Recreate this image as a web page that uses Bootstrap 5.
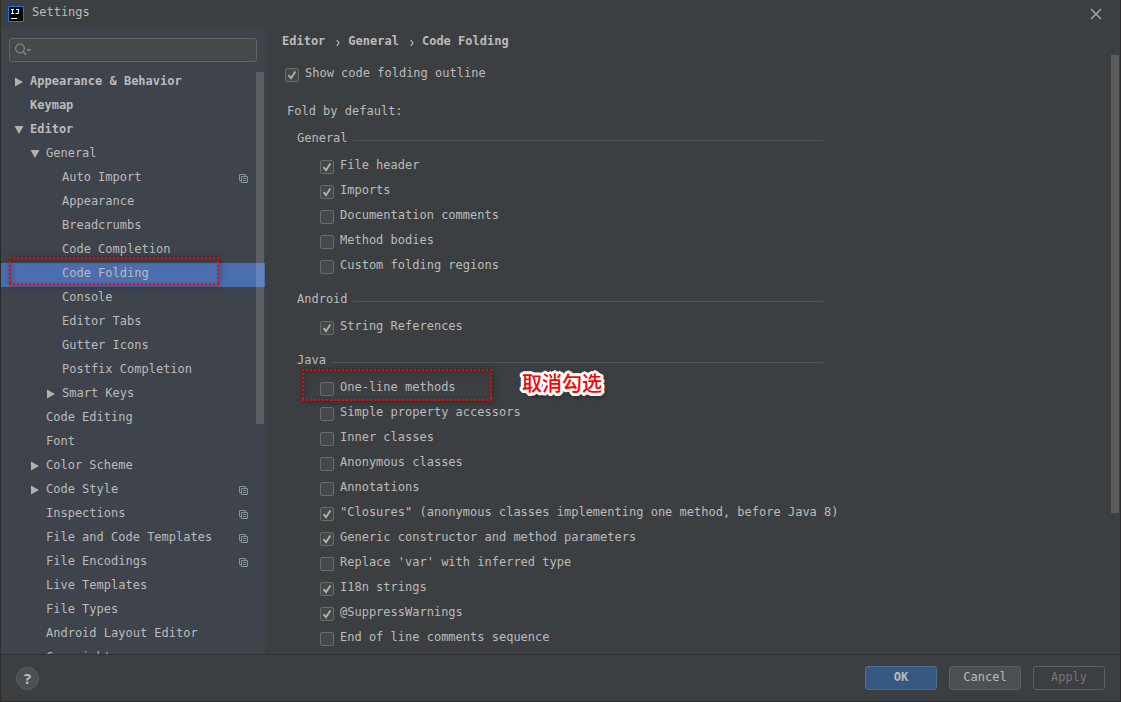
<!DOCTYPE html>
<html lang="en">
<head>
<meta charset="utf-8">
<meta name="viewport" content="width=device-width, initial-scale=1">
<title>Settings</title>
<link href="https://cdn.jsdelivr.net/npm/bootstrap@5.3.0/dist/css/bootstrap.min.css" rel="stylesheet">
<style>
  body { background: #3c3f41; color: #bbbbbb; font: 12px/20px "DejaVu Sans Mono", "Liberation Mono", "Noto Sans CJK SC", monospace; }
  a { color: inherit; text-decoration: none; }
  .dialog { border: 1px solid #2b2b2b; border-top: 0; }
  .titlebar { height: 28px; padding: 0 18px 4px 7px; }
  .titlebar .app-icon { margin-top: 4px; }
  .close-btn { margin-top: 4px; line-height: 0; }
  .plain-btn { background: none; border: 0; padding: 0; color: inherit; }

  .side { width: 264px; background: #3f434c; }
  .search { margin: 10px 8px 9px; }
  .search input { width: 100%; height: 24px; background: #45494a; border: 1px solid #646464; border-radius: 3px; color: #bbbbbb; padding: 0 6px 0 26px; outline: 0; }
  .search svg { left: 6px; top: 5px; }
  .tree-item { height: 24px; line-height: 20px; padding-right: 17px; }
  .tree-item .twisty { width: 16px; line-height: 0; padding-top: 6px; }
  .lvl-0 { padding-left: 13px; }
  .lvl-1 { padding-left: 29px; }
  .lvl-2 { padding-left: 45px; }
  .tree-item.chosen { background: #4b6eaf; }
  .tree-item .shared { margin-top: 7px; line-height: 0; }
  .thumb { width: 8px; background: rgba(255,255,255,.15); }
  .side .thumb { top: 44px; right: 1px; height: 352px; }
  .page .thumb { top: 27px; right: 1px; height: 458px; }

  .page { padding-left: 17px; }
  .crumbs { height: 34px; padding-top: 3px; font-weight: bold; }
  .crumbs svg { margin: 8px 8px 0 11px; }
  .option { height: 25px; line-height: 22px; }
  .option input { appearance: none; width: 14px; height: 14px; margin: 6px 6px 0 0; border: 1px solid #6b6b6b; border-radius: 2px; background: #43494a; flex: none; }
  .option input:checked { background: #43494a url("data:image/svg+xml,%3Csvg xmlns='http://www.w3.org/2000/svg' viewBox='0 0 12 12'%3E%3Cpath d='M2.5 6.2 5 9.2 9.4 2.4' fill='none' stroke='%23b4b4b4' stroke-width='1.8'/%3E%3C/svg%3E"); }
  .lead-option { padding-left: 3px; }
  .fold-title { height: 31px; padding: 15px 0 0 5px; line-height: 18px; }
  .groups { max-width: 541px; padding-left: 15px; }
  .groups legend { height: 36px; margin: 0; padding-top: 10px; font-size: 12px; line-height: 20px; }
  .groups legend::after { content: ""; flex: 1; height: 1px; margin: 12px 0 0 5px; background: #515151; }
  .groups .option { padding-left: 23px; }

  .marker { pointer-events: none; box-shadow: 1px 1px 6px rgba(0,0,0,.3), inset 2px 2px 6px rgba(0,0,0,.25); }
  .marker::after { content: ""; position: absolute; inset: 0;
    --across: linear-gradient(90deg, #f00 50%, transparent 50%);
    --down: linear-gradient(#f00 50%, transparent 50%);
    background:
      var(--across) 0 0 / 4px 2px repeat-x,
      var(--across) 0 100% / 4px 2px repeat-x,
      var(--down) 0 0 / 2px 4px repeat-y,
      var(--down) 100% 0 / 2px 4px repeat-y; }
  .marker-tree { left: 8px; top: -6px; width: 210px; height: 28px; }
  .marker-option { left: 5px; top: -7px; width: 190px; height: 32px; }
  .note { left: 225px; top: -5px; font: 500 20px/24px "Noto Sans CJK SC", sans-serif; color: #f00; white-space: nowrap;
    text-shadow: 2px 0 #fff, -2px 0 #fff, 0 2px #fff, 0 -2px #fff, 2px 2px #fff, -2px -2px #fff, 2px -2px #fff, -2px 2px #fff, 3px 0 #fff, -3px 0 #fff, 0 3px #fff, 0 -3px #fff, 1px 1px #fff, -1px -1px #fff, 3px 1px #fff, 3px -1px #fff, -3px 1px #fff, -3px -1px #fff, 1px 3px #fff, -1px 3px #fff, 2px 3px 5px #000; }

  .foot { height: 47px; border-top: 1px solid #323232; padding: 0 15px; }
  .help { width: 23px; height: 23px; border: 1px solid #5e6060; border-radius: 50%; background: #4c5052; font: bold 15px/20px "Noto Sans", sans-serif; }
  .foot .btn { --bs-btn-border-radius: 3px; width: 72px; height: 24px; padding: 0 0 3px; font-size: 12px; line-height: 18px; border-color: #5e6060; background: #4c5052; color: #bbbbbb; margin-left: 12px; }
  .foot .btn-ok { background: #365880; border-color: #4c708c; font-weight: bold; }
  .foot .btn:disabled { background: none; color: #777777; opacity: 1; }
</style>
</head>
<body>
<svg class="d-none">
  <symbol id="right" viewBox="0 0 10 10"><path d="M1 .5 9 5 1 9.5z" fill="#afb1b3"/></symbol>
  <symbol id="down" viewBox="0 0 10 10"><path d="M.5 1h9L5 9z" fill="#afb1b3"/></symbol>
  <symbol id="copy" viewBox="0 0 9 9"><path d="M2 6.500H.5v-6h6V2M2.500 2.500h6v6h-6zM4 4.500h3M4 6.500h3" fill="none" stroke="#87939a"/></symbol>
  <symbol id="sep" viewBox="0 0 4 8"><path d="M.7 1 3 4 .7 7" fill="none" stroke="#bbb" stroke-width="1.2"/></symbol>
</svg>
<div class="dialog vh-100 d-flex flex-column overflow-hidden">
  <header class="titlebar d-flex align-items-center flex-shrink-0">
    <svg class="app-icon" width="16" height="16" viewBox="0 0 16 16"><path d="M.5.5h15v15H.5z" fill="#000" stroke="#087cfa"/><path d="M3 3.500h3M4.500 3v5M3 7.500h3M8 3.500h2.500V6.500q0 1-1 1H7.500" fill="none" stroke="#fff" stroke-width="1.200"/><path d="M3 12h6v1H3z" fill="#fff"/></svg>
    <span class="ms-2 ps-0">Settings</span>
    <button class="plain-btn close-btn ms-auto" type="button" aria-label="Close"><svg width="12" height="12" viewBox="0 0 12 12"><path d="m1 1 10 10M11 1 1 11" stroke="#afb1b3" stroke-width="1.200"/></svg></button>
  </header>

  <div class="d-flex flex-grow-1 overflow-hidden">
    <nav class="side position-relative flex-shrink-0 overflow-hidden" aria-label="Settings sections">
      <div class="search position-relative">
        <svg class="position-absolute" width="17" height="14" viewBox="0 0 17 14"><circle cx="5" cy="5.500" r="4.400" fill="none" stroke="#7f8b91" stroke-width="1.200"/><path d="m8.200 8.700 3 3" stroke="#7f8b91" stroke-width="1.400"/><path d="M11.500 6h5L14 8.500z" fill="#7f8b91"/></svg>
        <input type="text" aria-label="Search settings">
      </div>
      <div id="tree"></div>
      <div class="thumb position-absolute"></div>
    </nav>
    <main class="page position-relative flex-grow-1 overflow-hidden">
      <div class="crumbs d-flex"><a href="#">Editor</a><svg width="4" height="8"><use href="#sep"/></svg><a href="#">General</a><svg width="4" height="8"><use href="#sep"/></svg><span>Code Folding</span></div>
      <label class="option lead-option d-flex"><input type="checkbox" checked>Show code folding outline</label>
      <div class="fold-title">Fold by default:</div>
      <div class="groups" id="groups"></div>
      <div class="thumb position-absolute"></div>
    </main>
  </div>

  <footer class="foot d-flex align-items-center flex-shrink-0">
    <button class="plain-btn help me-auto" type="button">?</button>
    <button class="btn btn-ok" type="button">OK</button>
    <button class="btn" type="button">Cancel</button>
    <button class="btn me-0" type="button" disabled>Apply</button>
  </footer>
</div>
<script>
  // [label, level, arrow, shared per project]
  const tree = [
    ["Appearance & Behavior", 0, "right"], ["Keymap", 0], ["Editor", 0, "down"], ["General", 1, "down"],
    ["Auto Import", 2, "", true], ["Appearance", 2], ["Breadcrumbs", 2], ["Code Completion", 2], ["Code Folding", 2],
    ["Console", 2], ["Editor Tabs", 2], ["Gutter Icons", 2], ["Postfix Completion", 2], ["Smart Keys", 2, "right"],
    ["Code Editing", 1], ["Font", 1], ["Color Scheme", 1, "right"], ["Code Style", 1, "right", true],
    ["Inspections", 1, "", true], ["File and Code Templates", 1, "", true], ["File Encodings", 1, "", true],
    ["Live Templates", 1], ["File Types", 1], ["Android Layout Editor", 1], ["Copyright", 1]
  ];
  const icon = (id, size) => `<svg width="${size}" height="${size}"><use href="#${id}"/></svg>`;
  document.getElementById("tree").innerHTML = tree.map(([name, lvl, arrow, shared]) => {
    const chosen = name === "Code Folding";
    return `<a href="#" class="tree-item lvl-${lvl} d-flex position-relative ${lvl ? "" : "fw-bold"} ${chosen ? "chosen" : ""}">
      <span class="twisty">${arrow ? icon(arrow, 10) : ""}</span><span>${name.replace("&", "&amp;")}</span>
      ${shared ? `<span class="shared ms-auto">${icon("copy", 9)}</span>` : ""}
      ${chosen ? `<span class="marker marker-tree position-absolute"></span>` : ""}</a>`;
  }).join("");

  const groups = {
    General: [["File header", 1], ["Imports", 1], ["Documentation comments"], ["Method bodies"], ["Custom folding regions"]],
    Android: [["String References", 1]],
    Java: [["One-line methods"], ["Simple property accessors"], ["Inner classes"], ["Anonymous classes"], ["Annotations"],
      ['"Closures" (anonymous classes implementing one method, before Java 8)', 1],
      ["Generic constructor and method parameters", 1], ["Replace 'var' with inferred type"], ["I18n strings", 1],
      ["@SuppressWarnings", 1], ["End of line comments sequence"]]
  };
  document.getElementById("groups").innerHTML = Object.entries(groups).map(([title, options]) =>
    `<fieldset><legend class="d-flex">${title}</legend>${options.map(([text, on]) =>
      `<div class="position-relative"><label class="option d-flex text-nowrap"><input type="checkbox" ${on ? "checked" : ""}>${text}</label>${
        text === "One-line methods" ? `<span class="marker marker-option position-absolute"></span><span class="note position-absolute" lang="zh">取消勾选</span>` : ""}</div>`).join("")}</fieldset>`).join("");
</script>
<script src="https://cdn.jsdelivr.net/npm/bootstrap@5.3.0/dist/js/bootstrap.bundle.min.js"></script>
</body>
</html>
